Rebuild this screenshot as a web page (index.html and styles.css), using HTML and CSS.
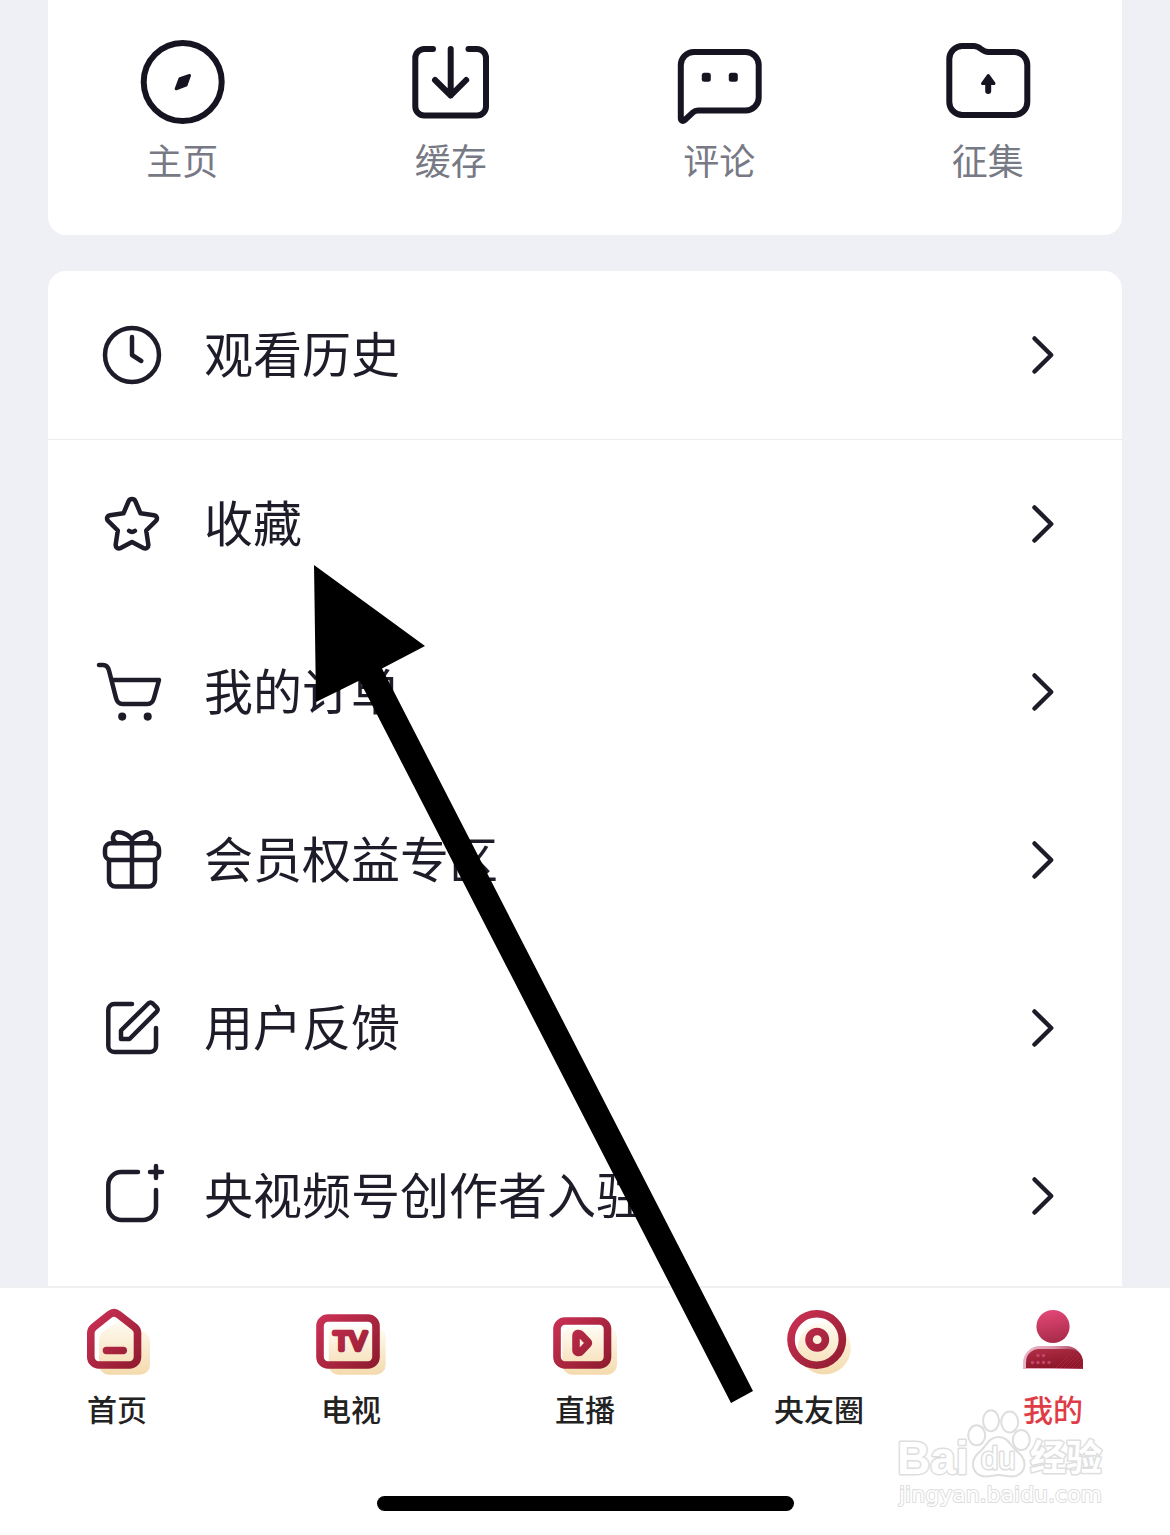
FILE: index.html
```html
<!DOCTYPE html>
<html lang="zh-CN">
<head>
  <meta charset="UTF-8">
  <meta name="viewport" content="width=device-width, initial-scale=1.0">
  <title>我的</title>
  <link rel="stylesheet" href="styles.css">
</head>
<body>
  <!-- shared gradients for the tab icons -->
  <svg class="defs" aria-hidden="true">
    <defs>
      <linearGradient id="red" x1="0" y1="0" x2="72" y2="72" gradientUnits="userSpaceOnUse">
        <stop offset="0.1" stop-color="#cd3156"/>
        <stop offset="0.9" stop-color="#8b1a2c"/>
      </linearGradient>
      <linearGradient id="cream" x1="0" y1="0" x2="0" y2="1">
        <stop offset="0" stop-color="#fffcf3"/>
        <stop offset="1" stop-color="#f4daad"/>
      </linearGradient>
      <linearGradient id="head" x1="0" y1="0" x2="0.2" y2="1">
        <stop offset="0" stop-color="#e84a7a"/>
        <stop offset="1" stop-color="#ab2c4b"/>
      </linearGradient>
      <linearGradient id="rim" x1="0" y1="0" x2="1" y2="0">
        <stop offset="0" stop-color="#e9b4c8"/>
        <stop offset="0.5" stop-color="#dd9bb0"/>
        <stop offset="1" stop-color="#a3304a"/>
      </linearGradient>
      <linearGradient id="torso" x1="0" y1="0" x2="0.5" y2="1">
        <stop offset="0" stop-color="#b23048"/>
        <stop offset="1" stop-color="#8a1628"/>
      </linearGradient>
    </defs>
  </svg>

  <main>
    <section class="card quick">
      <a href="#" class="quick-item">
        <svg class="quick-icon" viewBox="0 0 96 96" aria-hidden="true">
          <circle cx="48.7" cy="48" r="39"/>
          <path class="solid thin" d="M55.5 41.5L52 51.2L42.2 54.8L46 44.6Z"/>
        </svg>
        <span>主页</span>
      </a>
      <a href="#" class="quick-item">
        <svg class="quick-icon" viewBox="0 0 96 96" aria-hidden="true">
          <path d="M30 15H21.300a9 9 0 0 0-9 9V72.500a9 9 0 0 0 9 9H74a9 9 0 0 0 9-9V24a9 9 0 0 0-9-9H65.500"/>
          <path d="M47.700 15V61.500M32 46L47.700 61.500L63.200 46"/>
        </svg>
        <span>缓存</span>
      </a>
      <a href="#" class="quick-item">
        <svg class="quick-icon" viewBox="0 0 96 96" aria-hidden="true">
          <path d="M9.800 84V31a13 13 0 0 1 13-13H74.700a13 13 0 0 1 13 13V63.400a13 13 0 0 1-13 13H27c-2 0-3.600.7-5 2L13.500 86.300c-1.700 1.400-3.700.4-3.700-2.300Z"/>
          <rect class="solid" x="30.800" y="38.800" width="9" height="9" rx="2.500" stroke="none"/>
          <rect class="solid" x="57.800" y="38.800" width="9" height="9" rx="2.500" stroke="none"/>
        </svg>
        <span>评论</span>
      </a>
      <a href="#" class="quick-item">
        <svg class="quick-icon" viewBox="0 0 96 96" aria-hidden="true">
          <path d="M9.300 25a13 13 0 0 1 13-13H33.500c3.500 0 5 1 7.500 3s4 3 7.500 3H74.300a13 13 0 0 1 13 13V68a13 13 0 0 1-13 13H22.300a13 13 0 0 1-13-13Z"/>
          <path class="solid thin" d="M48.200 41.500L54 49.500H42.500Z"/>
          <path d="M48.200 48V57"/>
        </svg>
        <span>征集</span>
      </a>
    </section>

    <section class="card menu">
      <a href="#" class="menu-item divided">
        <svg class="menu-icon" viewBox="0 0 72 72" aria-hidden="true">
          <circle cx="36" cy="36" r="27"/>
          <path d="M36 18V36L45.300 42"/>
        </svg>
        <span>观看历史</span>
        <svg class="chevron" viewBox="0 0 24 40" aria-hidden="true"><path d="M3.500 3.500L20.200 20L3.500 36.500"/></svg>
      </a>
      <a href="#" class="menu-item">
        <svg class="menu-icon" viewBox="0 0 72 72" aria-hidden="true">
          <path d="M32.700 13c1.300-2.600 5.300-2.600 6.600 0L44.500 25.300L58 27.200c3 .4 4 3.800 1.700 6L50.200 42.500L52.300 56.400c.4 3.200-2.400 5-5 3.700L36 54L24.700 60.100c-2.600 1.300-5.400-.5-5-3.700L21.800 42.500L12.300 33.200c-2.300-2.200-1.300-5.600 1.700-6L27.500 25.300Z"/>
          <path d="M33 42.800q3 2.300 6 0"/>
        </svg>
        <span>收藏</span>
        <svg class="chevron" viewBox="0 0 24 40" aria-hidden="true"><path d="M3.500 3.500L20.200 20L3.500 36.500"/></svg>
      </a>
      <a href="#" class="menu-item">
        <svg class="menu-icon" viewBox="0 0 72 72" aria-hidden="true">
          <path d="M3 9H7c3.500 0 5 1.700 6 5.500L20 42c1.100 4 2.800 6 6.500 6H51.500c3.700 0 5.400-2 6.500-6L63 24H15.500"/>
          <circle class="solid" cx="26.200" cy="60.600" r="1.800"/>
          <circle class="solid" cx="51.700" cy="60.600" r="1.800"/>
        </svg>
        <span>我的订单</span>
        <svg class="chevron" viewBox="0 0 24 40" aria-hidden="true"><path d="M3.500 3.500L20.200 20L3.500 36.500"/></svg>
      </a>
      <a href="#" class="menu-item">
        <svg class="menu-icon" viewBox="0 0 72 72" aria-hidden="true">
          <rect x="9" y="19.300" width="54" height="16.700" rx="6"/>
          <path d="M13 36V56a6.500 6.500 0 0 0 6.500 6.500H52.500a6.500 6.500 0 0 0 6.500-6.500V36M36 16V62"/>
          <path d="M36 15.500C31 9 20.500 5.500 17.800 10.800c-1.500 3-.8 6 2 8M36 15.500C41 9 51.500 5.500 54.200 10.800c1.500 3 .8 6-2 8"/>
        </svg>
        <span>会员权益专区</span>
        <svg class="chevron" viewBox="0 0 24 40" aria-hidden="true"><path d="M3.500 3.500L20.200 20L3.500 36.500"/></svg>
      </a>
      <a href="#" class="menu-item">
        <svg class="menu-icon" viewBox="0 0 72 72" aria-hidden="true">
          <path d="M36 12H18.300a6 6 0 0 0-6 6V54a6 6 0 0 0 6 6H54a6 6 0 0 0 6-6V36"/>
          <path d="M25 47V38.500L52.300 11.500q2.200-2 4.400 0L60.800 15.600q1.700 2 0 4L33.500 47Z"/>
        </svg>
        <span>用户反馈</span>
        <svg class="chevron" viewBox="0 0 24 40" aria-hidden="true"><path d="M3.500 3.500L20.200 20L3.500 36.500"/></svg>
      </a>
      <a href="#" class="menu-item">
        <svg class="menu-icon" viewBox="0 0 72 72" aria-hidden="true">
          <path d="M42 12H25.300a13 13 0 0 0-13 13V47a13 13 0 0 0 13 13H47a13 13 0 0 0 13-13V30"/>
          <path d="M54 12H66M60 6V18"/>
        </svg>
        <span>央视频号创作者入驻</span>
        <svg class="chevron" viewBox="0 0 24 40" aria-hidden="true"><path d="M3.500 3.500L20.200 20L3.500 36.500"/></svg>
      </a>
    </section>
  </main>

  <nav class="tabs">
    <div class="tab-list">
      <a href="#" class="tab">
        <svg class="tab-icon" viewBox="0 0 72 72" aria-hidden="true">
          <path fill="url(#cream)" d="M18 36q0-5 4-8.500L38 17q5-2.500 9 .5L64 29q5 3.500 5 9V60.700a10 10 0 0 1-10 10H28a10 10 0 0 1-10-10Z"/>
          <path class="line" d="M9.800 29q0-3.500 3-6L28.500 10.500q4.500-3.500 9 0L53.500 23q3 2.500 3 6V53a8 8 0 0 1-8 8H17.800a8 8 0 0 1-8-8Z"/>
          <rect fill="url(#red)" x="21.700" y="42.700" width="24.300" height="7.500" rx="3.700"/>
        </svg>
        <span>首页</span>
      </a>
      <a href="#" class="tab">
        <svg class="tab-icon" viewBox="0 0 72 72" aria-hidden="true">
          <rect fill="url(#cream)" x="13.700" y="22.700" width="57" height="48" rx="10"/>
          <rect class="line" x="5" y="14" width="56" height="47" rx="8"/>
          <text class="tv" x="35" y="46" text-anchor="middle">TV</text>
        </svg>
        <span>电视</span>
      </a>
      <a href="#" class="tab">
        <svg class="tab-icon" viewBox="0 0 72 72" aria-hidden="true">
          <rect fill="url(#cream)" x="13.300" y="23" width="54.700" height="47.700" rx="10"/>
          <rect class="line" x="8" y="17" width="50.500" height="44" rx="8"/>
          <path class="line" d="M27 32q0-2 2-2.500q2-.3 3 1L38.600 37.500q1.300 1.500 0 3L32 47.500q-1 1.300-3 1q-2-.5-2-2.500Z"/>
        </svg>
        <span>直播</span>
      </a>
      <a href="#" class="tab">
        <svg class="tab-icon" viewBox="0 0 72 72" aria-hidden="true">
          <circle fill="url(#cream)" cx="41.300" cy="44" r="26.500"/>
          <circle class="line" cx="33.700" cy="35.500" r="25.700"/>
          <circle class="line" cx="34.200" cy="35.700" r="8.200"/>
        </svg>
        <span>央友圈</span>
      </a>
      <a href="#" class="tab active">
        <svg class="tab-icon" viewBox="0 0 72 72" aria-hidden="true">
          <circle fill="url(#head)" cx="36" cy="22.500" r="16.600"/>
          <path fill="url(#rim)" d="M6 65V59a17 17 0 0 1 17-17H49a17 17 0 0 1 17 17V65Z"/>
          <path fill="url(#torso)" d="M9 64V58a13 13 0 0 1 13-13H52q14 1 14 14V64Z"/>
          <g fill="#c94268">
            <circle cx="21" cy="51.500" r="1.700"/><circle cx="26.500" cy="51.500" r="1.700"/>
            <circle cx="15.500" cy="58.500" r="1.700"/><circle cx="21" cy="58.500" r="1.700"/>
            <circle cx="26.500" cy="58.500" r="1.700"/><circle cx="32" cy="58.500" r="1.700"/>
          </g>
          <path stroke="#ac2340" d="M39 64L53 50M43 64L57 50M47 64L61 50M51 64L64 51M55 64L65 54M59 64L66 57M63 64L66 61"/>
        </svg>
        <span>我的</span>
      </a>
    </div>
    <div class="home-bar"></div>

    <svg class="watermark" viewBox="0 0 220 108" aria-hidden="true">
      <g class="mark">
        <text class="brand" x="5" y="70">Bai</text>
        <ellipse cx="84.700" cy="31.300" rx="8.500" ry="10"/>
        <ellipse cx="99" cy="16.700" rx="8" ry="10.500"/>
        <ellipse cx="117.700" cy="18" rx="8.500" ry="10.500"/>
        <ellipse cx="129.300" cy="36" rx="8.500" ry="10"/>
        <path d="M106.500 33c9 0 11 7 16 12c5 4.500 10 8 10 15c0 8-6 12.500-13 12.500c-5 0-8-1.500-13-1.500s-7 1.500-12 1.500c-8 0-13.500-4.500-13.500-12.500c0-7 5-10.500 9.500-15c5-5 7-12 16-12Z"/>
        <text class="du" x="89" y="65">du</text>
        <text class="cjk" x="138" y="67">经验</text>
        <text class="site" x="7" y="98">jingyan.baidu.com</text>
      </g>
    </svg>
  </nav>

  <!-- pointer to the favourites row -->
  <svg class="pointer" viewBox="0 0 439 838" aria-hidden="true">
    <polygon points="0,0 111,81 68,103.500 439,826 417,838 45.500,115.500 2,137"/>
  </svg>
</body>
</html>
```
FILE: styles.css
```css
* {
  box-sizing: border-box;
}
body {
  position: relative;
  display: flex;
  flex-direction: column;
  min-height: 100vh;
  margin: 0;
  background: #eff0f5;
  color: #1e1c29;
  font-family: "Noto Sans CJK SC", "Noto Sans", sans-serif;
}
a {
  color: inherit;
  text-decoration: none;
}
svg {
  display: block;
  flex: none;
  fill: none;
}
.defs {
  position: absolute;
  width: 0;
  height: 0;
}
main {
  padding: 0 48px;
}
.card {
  background: #fff;
}

/* shortcuts */
.quick {
  display: grid;
  grid-template-columns: repeat(4, 1fr);
  margin-bottom: 36px;
  padding: 34px 0 51px;
  border-radius: 0 0 18px 18px;
}
.quick-item {
  display: flex;
  flex-direction: column;
  align-items: center;
  gap: 4px;
  color: #777985;
  font-size: 36px;
  line-height: 50px;
}
.quick-icon {
  width: 96px;
  height: 96px;
  stroke: #171421;
  stroke-width: 6;
  stroke-linecap: round;
  stroke-linejoin: round;
}
.solid {
  fill: #171421;
}
.thin {
  stroke-width: 3;
}

/* menu rows */
.menu {
  padding-bottom: 6px;
  border-radius: 18px 18px 0 0;
}
.menu-item {
  display: flex;
  align-items: center;
  gap: 36px;
  height: 168px;
  padding: 0 67px 0 48px;
  font-size: 49px;
  line-height: 72px;
}
.menu-item span {
  flex: 1;
  padding-bottom: 6px;
}
.divided {
  height: 169px;
  border-bottom: 1px solid #ececef;
}
.menu-icon,
.chevron {
  stroke: #1e1c29;
  stroke-width: 4.5;
  stroke-linecap: round;
  stroke-linejoin: round;
}
.menu-icon {
  width: 72px;
  height: 72px;
}
.chevron {
  width: 24px;
  height: 40px;
}

/* bottom tabs */
.tabs {
  position: relative;
  flex: 1;
  padding: 16px 0 24px;
  border-top: 2px solid #f0f0f2;
  background: #fff;
}
.tab-list {
  display: grid;
  grid-template-columns: repeat(5, 1fr);
  margin-bottom: 68px;
}
.tab {
  display: flex;
  flex-direction: column;
  align-items: center;
  gap: 12px;
  color: #222;
  font-size: 30px;
  font-weight: 500;
  line-height: 40px;
}
.tab.active {
  color: #e03c46;
}
.tab-icon {
  width: 72px;
  height: 72px;
}
.line {
  stroke: url(#red);
  stroke-width: 7.6;
  stroke-linejoin: round;
}
.tv {
  fill: url(#red);
  stroke: url(#red);
  stroke-width: 4.5;
  stroke-linejoin: round;
  font: 26px "Liberation Sans", sans-serif;
}
.home-bar {
  width: 417px;
  height: 15px;
  margin: 0 auto;
  border-radius: 8px;
  background: #000;
}

/* overlays */
.watermark {
  position: absolute;
  right: 58px;
  bottom: 23px;
  width: 220px;
  height: 108px;
}
.mark {
  fill: #fff;
  stroke: #dedede;
  stroke-width: 2;
  stroke-linejoin: round;
}
.mark text {
  paint-order: stroke;
  stroke-width: 3;
}
.brand {
  font: bold 46px "Liberation Sans", sans-serif;
}
.du {
  font: 31px "Liberation Sans", sans-serif;
}
.cjk {
  font: bold 36px "Noto Sans CJK SC", sans-serif;
}
.site {
  font: 22px "DejaVu Sans", sans-serif;
}
.mark .site {
  stroke-width: 2;
}
.pointer {
  position: absolute;
  top: 565px;
  left: 314px;
  width: 439px;
  height: 838px;
  fill: #000;
  pointer-events: none;
}
```
